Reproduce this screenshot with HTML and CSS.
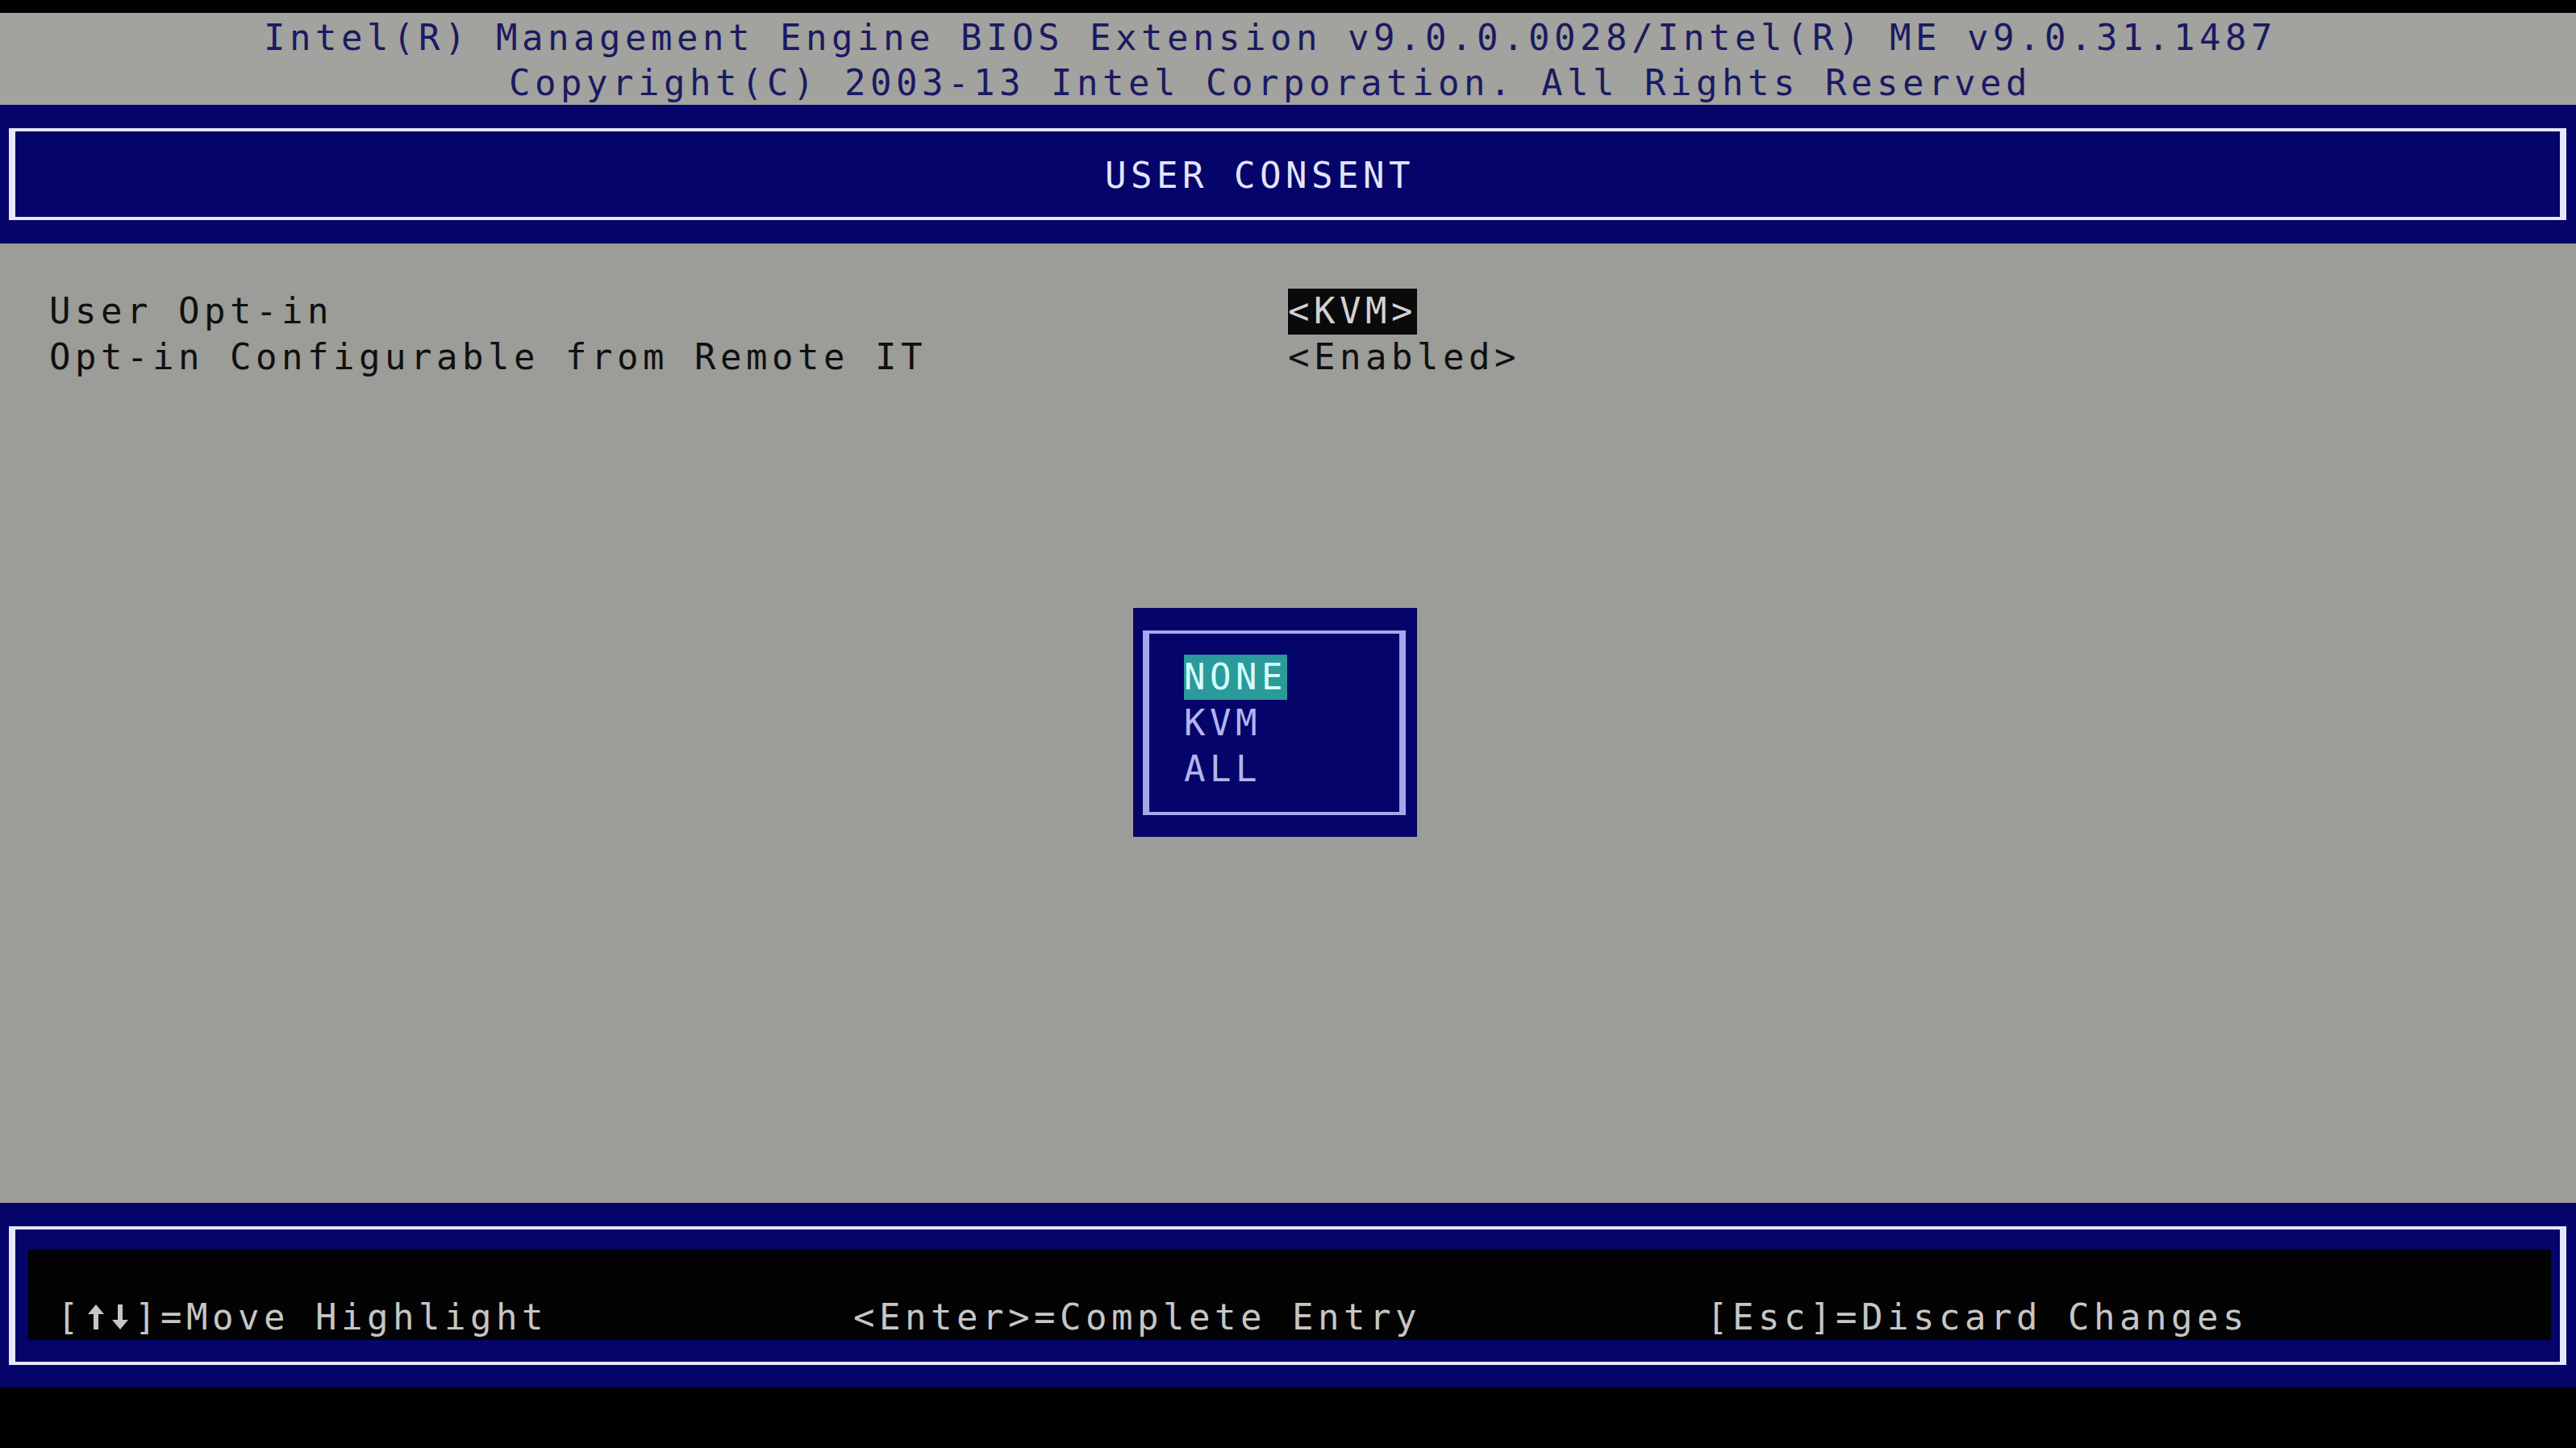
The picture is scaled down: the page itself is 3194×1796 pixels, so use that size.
FILE: index.html
```html
<!DOCTYPE html>
<html lang="en">
<head>
<meta charset="utf-8">
<title>Intel(R) MEBx - User Consent</title>
<link rel="stylesheet" href="styles.css">
</head>
<body>
<div class="screen">
  <div class="topbar"></div>
  <header class="header">
    <div class="hline">Intel(R) Management Engine BIOS Extension v9.0.0.0028/Intel(R) ME v9.0.31.1487</div>
    <div class="hline">Copyright(C) 2003-13 Intel Corporation. All Rights Reserved</div>
  </header>
  <section class="band band-title">
    <div class="frame frame-title"><span class="title">USER CONSENT</span></div>
  </section>
  <main class="content">
    <div class="row"><span class="label">User Opt-in</span><span class="value value-sel">&lt;KVM&gt;</span></div>
    <div class="row"><span class="label">Opt-in Configurable from Remote IT</span><span class="value">&lt;Enabled&gt;</span></div>
    <div class="popup">
      <div class="popup-frame">
        <div class="opt"><span class="opt-sel">NONE</span></div>
        <div class="opt">KVM</div>
        <div class="opt">ALL</div>
      </div>
    </div>
  </main>
  <section class="band band-foot">
    <div class="frame frame-foot">
      <div class="keys">
        <span class="key">[<svg class="arrows" width="64" height="31" viewBox="0 0 64 31" role="img" aria-label="↑↓"><path d="M16 31V9" stroke="#c6c6c6" stroke-width="6" fill="none"/><path d="M6 12L16 0L26 12Z" fill="#c6c6c6"/><path d="M46 0V22" stroke="#c6c6c6" stroke-width="6" fill="none"/><path d="M36 19L46 31L56 19Z" fill="#c6c6c6"/></svg>]=Move Highlight</span>
        <span class="key">&lt;Enter&gt;=Complete Entry</span>
        <span class="key">[Esc]=Discard Changes</span>
      </div>
    </div>
  </section>
  <div class="bottombar"></div>
</div>
</body>
</html>
```

FILE: styles.css
```css
* { box-sizing: border-box; }

html, body {
  margin: 0;
  padding: 0;
  background: #000;
}

body {
  font-family: "DejaVu Sans Mono", "Liberation Mono", monospace;
  font-size: 44px;
  letter-spacing: 5.51px;
}

.screen {
  width: 3194px;
  height: 1796px;
  display: flex;
  flex-direction: column;
  overflow: hidden;
}

.topbar {
  flex: none;
  height: 16px;
  background: #000;
}

.header {
  flex: none;
  height: 114px;
  padding-top: 3px;
  padding-right: 44px;
  background: #a2a29e;
  color: #1a1a62;
  text-align: center;
}

.hline {
  height: 56px;
  line-height: 56.8px;
  white-space: pre;
}

.band {
  flex: none;
  background: #04046a;
  padding: 29px 12px 0 11px;
}

.band-title { height: 172px; }
.band-foot { height: 229px; }

.frame {
  border-style: solid;
  border-color: #e6e6fc;
  border-width: 4px 8px;
}

.frame-title {
  height: 114px;
  display: flex;
  align-items: center;
  justify-content: center;
  padding-right: 69px;
  padding-top: 4px;
  color: #e4e4fa;
  line-height: 56.8px;
}

.content {
  flex: 1;
  position: relative;
  background: #9c9c98;
  color: #101010;
  padding-top: 56px;
  padding-left: 61px;
}

.row {
  display: grid;
  grid-template-columns: 1536px auto;
  height: 56.8px;
  line-height: 56px;
  white-space: pre;
}

.value { justify-self: start; }

.value-sel {
  background: #0a0a0a;
  color: #d2d2d2;
}

.popup {
  position: absolute;
  left: 1405px;
  top: 452px;
  width: 352px;
  height: 284px;
  background: #04046a;
  padding: 28px 14px 27px 12px;
}

.popup-frame {
  height: 100%;
  border-style: solid;
  border-color: #a6a6ea;
  border-width: 4px 8px;
  padding: 26px 0 0 43px;
  color: #b4b4ec;
}

.opt {
  height: 56.8px;
  line-height: 56.8px;
  white-space: pre;
}

.opt-sel {
  display: inline-block;
  height: 56px;
  line-height: 56px;
  vertical-align: top;
  background: #2a9a9a;
  color: #d6ffff;
}

.frame-foot {
  height: 172px;
  padding: 25px 11px 27px 16px;
}

.keys {
  height: 112px;
  background: #030303;
  padding-top: 56px;
  padding-left: 36px;
  display: grid;
  grid-template-columns: 987px 1058px auto;
  line-height: 56px;
  color: #c6c6c6;
  white-space: pre;
}

.arrows {
  display: inline-block;
  vertical-align: baseline;
  margin-right: 0;
}

.bottombar {
  flex: none;
  height: 75px;
  background: #000;
}
```
